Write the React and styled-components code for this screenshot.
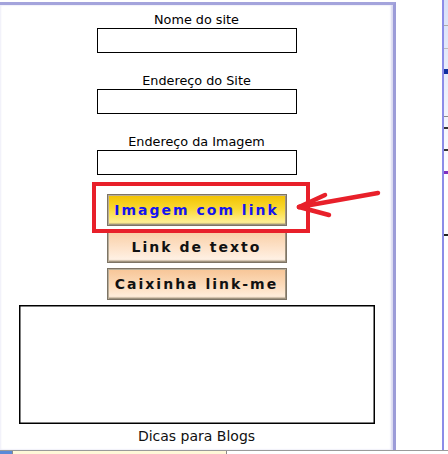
import React from "react";
import styled, { createGlobalStyle } from "styled-components";

const Global = createGlobalStyle`
  html, body { margin: 0; padding: 0; background: #fff; }
  body { width: 448px; height: 454px; overflow: hidden; font-family: "DejaVu Sans", sans-serif; }
`;

const Screen = styled.div`
  width: 448px;
  height: 454px;
  display: flex;
  flex-direction: column;
  background: #fff;
`;

const Top = styled.div`
  display: flex;
  height: 451px;
`;

const Panel = styled.div`
  margin-top: 2px;
  width: 398px;
  box-sizing: border-box;
  border-top: 3px solid #a4a4dc;
  border-right: 3px solid #9c9cd8;
  box-shadow: inset 1px 0 2px #eeeef8, inset -2px 0 2px #d8d8f0;
  background: #fff;
  display: flex;
  flex-direction: column;
  align-items: center;
  padding-top: 7px;
`;

const Label = styled.div`
  font-family: "DejaVu Sans", sans-serif;
  font-size: 12.8px;
  line-height: 16px;
  color: #000;
  margin-top: ${p => p.$mt || 0}px;
`;

const Input = styled.div`
  width: 200px;
  height: 25px;
  box-sizing: border-box;
  border: 1px solid #000;
  background: #fff;
`;

const Buttons = styled.div`
  margin-top: 19px;
  display: flex;
  flex-direction: column;
  align-items: center;
  gap: 5px;
  width: 100%;
`;

const Highlight = styled.div`
  position: relative;
`;

const RedBox = styled.div`
  position: absolute;
  left: -15px;
  top: -12px;
  width: 218px;
  height: 51px;
  box-sizing: border-box;
  border: 4px solid #e8202a;
  pointer-events: none;
`;

const Arrow = styled.svg`
  position: absolute;
  left: 185px;
  top: -8px;
  overflow: visible;
`;

const Btn = styled.div`
  width: 180px;
  height: ${p => p.$h || 32}px;
  box-sizing: border-box;
  border: 1px solid #7d7466;
  box-shadow: inset 1px 1px 0 #b8ad98, inset -1px -1px 0 #a09480, inset 0 -2px 1px rgba(120,100,70,0.35);
  background: ${p =>
    p.$variant === "yellow"
      ? "linear-gradient(#f2c200, #f9d830 45%, #fff3a8)"
      : p.$variant === "orange"
      ? "linear-gradient(#f7c596, #fcdcbc 55%, #fff1e2)"
      : "linear-gradient(#f9cfa6, #fde3cb 55%, #fff4ea)"};
  display: flex;
  align-items: center;
  justify-content: center;
  font-family: "DejaVu Sans", sans-serif;
  font-weight: bold;
  font-size: 14px;
  letter-spacing: 2px;
  color: ${p => (p.$variant === "yellow" ? "#1414f0" : "#111")};
`;

const TextArea = styled.div`
  margin-top: 5px;
  width: 356px;
  height: 119px;
  box-sizing: border-box;
  border: 1px solid #000;
  box-shadow: inset 0 0 0 0.5px #000;
`;

const Caption = styled.div`
  margin-top: 4px;
  font-family: "DejaVu Sans", sans-serif;
  font-size: 14px;
  line-height: 17px;
  color: #111;
`;

const Side = styled.div`
  margin-left: 46px;
  width: 4px;
  height: 100%;
  border-left: 2px solid #8c8ce8;
  background: linear-gradient(#d8e0f8, #ffffff 40%);
  display: flex;
  flex-direction: column;
`;

const SideMark = styled.div`
  margin-top: ${p => p.$mt}px;
  height: ${p => p.$h || 1}px;
  background: ${p => p.$c || "#555"};
`;

const Bottom = styled.div`
  height: 3px;
  border-top: 1px solid #9a9a9a;
  display: flex;
  background: #fff;
`;

const Tab = styled.div`
  width: ${p => p.$w}px;
  background: ${p => p.$c};
  border-right: 1px solid #8a8a8a;
`;

export default function App() {
  return (
    <Screen>
      <Global />
      <Top>
        <Panel>
          <Label>Nome do site</Label>
          <Input />
          <Label $mt={20}>Endereço do Site</Label>
          <Input />
          <Label $mt={20}>Endereço da Imagem</Label>
          <Input />
          <Buttons>
            <Highlight>
              <Btn $variant="yellow">Imagem com link</Btn>
              <RedBox />
              <Arrow width="90" height="40" viewBox="0 0 90 40">
                <g stroke="#e8202a" strokeWidth="4.5" strokeLinecap="round" fill="none">
                  <path d="M7 21 L 86 7" />
                  <path d="M7 21 L 33 9" />
                  <path d="M7 21 L 37 29" />
                </g>
              </Arrow>
            </Highlight>
            <Btn $variant="peach" $h={32}>Link de texto</Btn>
            <Btn $variant="orange">Caixinha link-me</Btn>
          </Buttons>
          <TextArea />
          <Caption>Dicas para Blogs</Caption>
        </Panel>
        <Side>
          <SideMark $mt={25} $c="#aaa" />
          <SideMark $mt={22} $c="#bbb" />
          <SideMark $mt={20} $h={5} $c="#1030a0" />
          <SideMark $mt={42} $c="#888" />
          <SideMark $mt={10} $h={2} $c="#333" />
          <SideMark $mt={20} $h={2} $c="#333" />
          <SideMark $mt={20} $h={3} $c="#8030c0" />
          <SideMark $mt={60} $h={2} $c="#222" />
        </Side>
      </Top>
      <Bottom>
        <Tab $w={12} $c="#5a8ad8" />
        <Tab $w={213} $c="#fff8d8" />
      </Bottom>
    </Screen>
  );
}
